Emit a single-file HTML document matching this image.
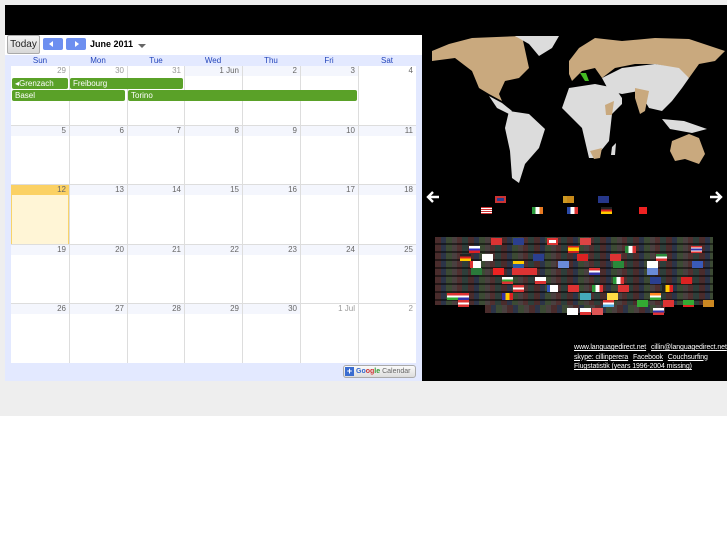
<!DOCTYPE html>
<html><head><meta charset="utf-8">
<style>
*{margin:0;padding:0;box-sizing:border-box}
body{width:727px;height:545px;background:#fff;font-family:"Liberation Sans",sans-serif;position:relative;overflow:hidden}
.gray{position:absolute;left:0;top:0;width:727px;height:416px;background:#eeeeee}
.topbar{position:absolute;left:5px;top:5px;width:722px;height:30px;background:#000}
.cal{position:absolute;left:5px;top:35px;width:417px;height:346px;background:#e3e9ff}
.tb{position:absolute;left:0;top:0;width:417px;height:20px;background:#fff}
.today{position:absolute;left:2px;top:0;width:33px;height:19px;border:1px solid #aaa;border-radius:2px;background:linear-gradient(#f4f4f4,#d8d8d8);font-size:10px;color:#222;text-align:center;line-height:18px}
.nb{position:absolute;top:3px;width:20px;height:12px;background:#6d8ff0;border-radius:2px}
.nb:after{content:"";position:absolute;top:3px;border:3px solid transparent}
.nl:after{left:6px;border-right:4px solid #fff;border-left:0}
.nr:after{left:9px;border-left:4px solid #fff;border-right:0}
.mt{position:absolute;left:85px;top:4px;font-size:9px;font-weight:bold;color:#000}
.dd{position:absolute;left:133px;top:9px;border:4px solid transparent;border-top:4px solid #666;border-bottom:0}
.dh{position:absolute;top:21px;font-size:8px;color:#2244bb;text-align:center;width:58px}
.grid{position:absolute;left:6px;top:31px;width:405px;height:297px;background:#fff}
.vl{position:absolute;top:0;width:1px;height:297px;background:#ddd}
.hl{position:absolute;left:0;width:405px;height:1px;background:#ddd}
.num{position:absolute;height:10px;font-size:8px;color:#666;text-align:right;padding-right:3px;line-height:10px;background:#f4f6fd}
.num.o{background:#fff;color:#999}
.ev{position:absolute;height:11px;background:#5aa128;border-radius:2px;color:#fff;font-size:8px;line-height:11px;padding-left:3px}
.gc{position:absolute;left:338px;top:330px;width:73px;height:13px;border:1px solid #aaa;border-radius:3px;background:linear-gradient(#fafafa,#ddd);font-size:7px;color:#666;line-height:11px}
.right{position:absolute;left:422px;top:35px;width:305px;height:346px;background:#000}
.fl{position:absolute;width:11px;height:7px}
.mosaic{position:absolute;left:13px;top:202px;width:278px;height:68px;background:repeating-linear-gradient(180deg,rgba(0,0,0,0) 0 6px,rgba(0,0,0,.5) 6px 8px),repeating-linear-gradient(90deg,#4a2c2c 0 6px,#2c3448 6px 11px,#3c4a34 11px 17px,#4a4040 17px 22px,#503030 22px 27px,#2e3e3a 27px 33px)}
.mos2{position:absolute;left:63px;top:270px;width:180px;height:8px;background:repeating-linear-gradient(90deg,#4a2c2c 0 6px,#2c3448 6px 11px,#3c4a34 11px 17px,#4a4040 17px 22px)}
.links{position:absolute;left:152px;top:308px;font-size:7px;color:#fff;line-height:9.5px;white-space:nowrap;letter-spacing:-0.1px}
.links u{margin-right:3px}
</style></head><body>
<div class="gray"></div>
<div class="topbar"></div>
<div class="cal">
 <div class="tb">
  <div class="today">Today</div>
  <div class="nb nl" style="left:38px"></div>
  <div class="nb nr" style="left:61px"></div>
  <div class="mt">June 2011</div>
  <div class="dd"></div>
 </div>
 <div class="dh" style="left:6px">Sun</div>
 <div class="dh" style="left:64px">Mon</div>
 <div class="dh" style="left:122px">Tue</div>
 <div class="dh" style="left:179px">Wed</div>
 <div class="dh" style="left:237px">Thu</div>
 <div class="dh" style="left:295px">Fri</div>
 <div class="dh" style="left:353px">Sat</div>
 <div class="grid">
  <div class="num o" style="left:0;top:0;width:58px">29</div>
  <div class="num o" style="left:58px;top:0;width:58px">30</div>
  <div class="num o" style="left:116px;top:0;width:57px">31</div>
  <div class="num" style="left:173px;top:0;width:58px">1 Jun</div>
  <div class="num" style="left:231px;top:0;width:58px">2</div>
  <div class="num" style="left:289px;top:0;width:58px">3</div>
  <div class="num" style="left:347px;top:0;width:58px;background:#fff">4</div>
  <div class="num" style="left:0;top:60px;width:58px">5</div>
  <div class="num" style="left:58px;top:60px;width:58px">6</div>
  <div class="num" style="left:116px;top:60px;width:57px">7</div>
  <div class="num" style="left:173px;top:60px;width:58px">8</div>
  <div class="num" style="left:231px;top:60px;width:58px">9</div>
  <div class="num" style="left:289px;top:60px;width:58px">10</div>
  <div class="num" style="left:347px;top:60px;width:58px">11</div>
  <div style="position:absolute;left:0;top:119px;width:58px;height:60px;background:#fff5d6;border:1px solid #f8d36a"></div>
  <div class="num" style="left:0;top:119px;width:58px;background:#fbd164">12</div>
  <div class="num" style="left:58px;top:119px;width:58px">13</div>
  <div class="num" style="left:116px;top:119px;width:57px">14</div>
  <div class="num" style="left:173px;top:119px;width:58px">15</div>
  <div class="num" style="left:231px;top:119px;width:58px">16</div>
  <div class="num" style="left:289px;top:119px;width:58px">17</div>
  <div class="num" style="left:347px;top:119px;width:58px">18</div>
  <div class="num" style="left:0;top:179px;width:58px">19</div>
  <div class="num" style="left:58px;top:179px;width:58px">20</div>
  <div class="num" style="left:116px;top:179px;width:57px">21</div>
  <div class="num" style="left:173px;top:179px;width:58px">22</div>
  <div class="num" style="left:231px;top:179px;width:58px">23</div>
  <div class="num" style="left:289px;top:179px;width:58px">24</div>
  <div class="num" style="left:347px;top:179px;width:58px">25</div>
  <div class="num" style="left:0;top:238px;width:58px">26</div>
  <div class="num" style="left:58px;top:238px;width:58px">27</div>
  <div class="num" style="left:116px;top:238px;width:57px">28</div>
  <div class="num" style="left:173px;top:238px;width:58px">29</div>
  <div class="num" style="left:231px;top:238px;width:58px">30</div>
  <div class="num o" style="left:289px;top:238px;width:58px">1 Jul</div>
  <div class="num o" style="left:347px;top:238px;width:58px">2</div>
  <div class="vl" style="left:58px"></div><div class="vl" style="left:116px"></div><div class="vl" style="left:173px"></div><div class="vl" style="left:231px"></div><div class="vl" style="left:289px"></div><div class="vl" style="left:347px"></div>
  <div class="hl" style="top:59px"></div><div class="hl" style="top:118px"></div><div class="hl" style="top:178px"></div><div class="hl" style="top:237px"></div>
  <div class="ev" style="left:1px;top:12px;width:56px">◂Grenzach</div>
  <div class="ev" style="left:59px;top:12px;width:113px">Freibourg</div>
  <div class="ev" style="left:1px;top:24px;width:113px">Basel</div>
  <div class="ev" style="left:117px;top:24px;width:229px">Torino</div>
 </div>
 <div class="gc"><span style="display:inline-block;width:9px;height:9px;background:#3a6cd0;color:#fff;font-size:9px;line-height:9px;text-align:center;margin:1px 2px 0 1px;vertical-align:top;font-weight:bold">+</span><span style="color:#3366cc;font-weight:bold">Go</span><span style="color:#cc3333;font-weight:bold">og</span><span style="color:#339933;font-weight:bold">le</span> Calendar</div>
</div>
<div class="right">
 <svg width="305" height="150" viewBox="0 0 305 150" style="position:absolute;left:0;top:0">
  <g fill="#c9a97e">
   <polygon points="10,16 27,9 50,3 100,1 107,33 97,43 83,46 77,59 80,66 67,59 57,53 50,36 33,23 10,26"/>
   <polygon points="147,26 157,13 173,3 200,6 233,3 267,4 303,16 293,26 277,29 267,43 253,33 233,29 213,29 193,33 180,43 173,33 160,36 150,46 147,39"/>
   <polygon points="250,106 267,99 277,103 283,119 277,129 263,124 253,126 248,116"/>
  </g>
  <g fill="#dcdcdc">
   <polygon points="93,1 137,1 130,13 117,21 107,9"/>
   <polygon points="67,61 80,68 90,76 87,79 75,73"/>
   <polygon points="87,76 107,79 123,94 117,113 103,129 97,148 90,143 88,116 83,93"/>
   <polygon points="180,43 200,33 233,29 257,33 267,43 260,53 250,66 240,76 227,73 217,56 200,59 187,56"/>
   <polygon points="147,53 173,49 193,53 200,63 200,69 190,79 187,106 173,123 167,123 160,93 150,83 140,73"/>
   <polygon points="240,84 262,86 285,94 270,98 248,94"/>
   <polygon points="190,112 194,108 193,120 189,120"/>
  </g>
  <g fill="#c9a97e">
   <polygon points="213,53 227,56 223,76 218,79 213,63"/>
   <polygon points="168,116 180,113 178,123 172,124"/>
   <polygon points="183,70 192,66 190,80 184,80"/>
  </g>
  <polygon points="158,38 164,38 167,46 163,46" fill="#44bb22"/>
 </svg>
 <svg width="16" height="14" viewBox="0 0 16 14" style="position:absolute;left:3px;top:155px"><path d="M14 7H3M8 2L3 7l5 5" stroke="#fff" stroke-width="2.4" fill="none"/></svg>
 <svg width="16" height="14" viewBox="0 0 16 14" style="position:absolute;left:286px;top:155px"><path d="M2 7h11M8 2l5 5-5 5" stroke="#fff" stroke-width="2.4" fill="none"/></svg>
 <div class="fl" style="left:73px;top:161px;background:#2b3f8f;border:2px solid #c33"></div>
 <div class="fl" style="left:141px;top:161px;background:#c88a1a;border-left:4px solid #c92"></div>
 <div class="fl" style="left:176px;top:161px;background:#26378a"></div>
 <div class="fl" style="left:59px;top:172px;background:repeating-linear-gradient(#c33 0 1px,#fff 1px 2px)"></div>
 <div class="fl" style="left:110px;top:172px;background:linear-gradient(90deg,#2a9a3a 33%,#fff 33% 66%,#e87a22 66%)"></div>
 <div class="fl" style="left:145px;top:172px;background:linear-gradient(90deg,#2a4aa8 33%,#fff 33% 66%,#d33 66%)"></div>
 <div class="fl" style="left:179px;top:172px;background:linear-gradient(#222 33%,#d22 33% 66%,#fc0 66%)"></div>
 <div class="fl" style="left:217px;top:172px;background:#e22;width:8px"></div>
 <div class="mosaic"></div>
 <div class="mos2"></div>
 <div class="fl" style="left:69px;top:203px;background:#d33"></div>
 <div class="fl" style="left:91px;top:203px;background:#2b3f8f"></div>
 <div class="fl" style="left:125px;top:203px;background:#fff;border:2px solid #d33"></div>
 <div class="fl" style="left:158px;top:203px;background:#d44"></div>
 <div class="fl" style="left:47px;top:211px;background:linear-gradient(#fff 33%,#33c 33% 66%,#d22 66%)"></div>
 <div class="fl" style="left:146px;top:211px;background:linear-gradient(#c22 25%,#fc0 25% 75%,#c22 75%)"></div>
 <div class="fl" style="left:203px;top:211px;background:linear-gradient(90deg,#2a8a3a 33%,#fff 33% 66%,#d33 66%)"></div>
 <div class="fl" style="left:269px;top:211px;background:linear-gradient(#d33 20%,#fff 20% 35%,#33a 35% 65%,#fff 65% 80%,#d33 80%)"></div>
 <div class="fl" style="left:38px;top:219px;background:linear-gradient(#222 33%,#d22 33% 66%,#fc0 66%)"></div>
 <div class="fl" style="left:60px;top:219px;background:#fff"></div>
 <div class="fl" style="left:111px;top:219px;background:#2b3f8f"></div>
 <div class="fl" style="left:155px;top:219px;background:#d22"></div>
 <div class="fl" style="left:188px;top:219px;background:#d33"></div>
 <div class="fl" style="left:234px;top:219px;background:linear-gradient(#2a8a3a 33%,#fff 33% 66%,#d33 66%)"></div>
 <div class="fl" style="left:48px;top:226px;background:#fff;border-left:3px solid #d33"></div>
 <div class="fl" style="left:91px;top:226px;background:#2a5aa8;border-top:3px solid #fc0"></div>
 <div class="fl" style="left:136px;top:226px;background:#6a8ad8"></div>
 <div class="fl" style="left:191px;top:226px;background:#2a8a3a"></div>
 <div class="fl" style="left:225px;top:226px;background:#fff"></div>
 <div class="fl" style="left:270px;top:226px;background:#3a5ab8"></div>
 <div class="fl" style="left:49px;top:233px;background:#2a7a3a"></div>
 <div class="fl" style="left:71px;top:233px;background:#e22"></div>
 <div class="fl" style="left:90px;top:233px;background:#d33"></div>
 <div class="fl" style="left:100px;top:233px;background:#d33;width:15px"></div>
 <div class="fl" style="left:167px;top:233px;background:linear-gradient(#d33 33%,#fff 33% 66%,#33a 66%)"></div>
 <div class="fl" style="left:225px;top:233px;background:#6a8ad8"></div>
 <div class="fl" style="left:80px;top:242px;background:linear-gradient(#fff 33%,#3a3 33% 66%,#d33 66%)"></div>
 <div class="fl" style="left:113px;top:242px;background:#fff;border-bottom:3px solid #d33"></div>
 <div class="fl" style="left:191px;top:242px;background:linear-gradient(90deg,#2a9a3a 33%,#fff 33% 66%,#d33 66%)"></div>
 <div class="fl" style="left:228px;top:242px;background:#2b3f8f"></div>
 <div class="fl" style="left:259px;top:242px;background:#d22"></div>
 <div class="fl" style="left:91px;top:250px;background:linear-gradient(#d33 33%,#fff 33% 66%,#d33 66%)"></div>
 <div class="fl" style="left:125px;top:250px;background:#fff;border-left:3px solid #35b"></div>
 <div class="fl" style="left:146px;top:250px;background:#d33"></div>
 <div class="fl" style="left:170px;top:250px;background:linear-gradient(90deg,#2a9a3a 33%,#fff 33% 66%,#d33 66%)"></div>
 <div class="fl" style="left:196px;top:250px;background:#d33"></div>
 <div class="fl" style="left:240px;top:250px;background:linear-gradient(90deg,#222 33%,#fc0 33% 66%,#d22 66%)"></div>
 <div class="fl" style="left:25px;top:258px;background:linear-gradient(#d33 33%,#fff 33% 66%,#3a3 66%)"></div>
 <div class="fl" style="left:36px;top:258px;background:linear-gradient(#d33 33%,#fff 33% 66%,#33a 66%)"></div>
 <div class="fl" style="left:80px;top:258px;background:linear-gradient(90deg,#33a 33%,#fc0 33% 66%,#d22 66%)"></div>
 <div class="fl" style="left:158px;top:258px;background:#4ab"></div>
 <div class="fl" style="left:185px;top:258px;background:#fd4"></div>
 <div class="fl" style="left:228px;top:258px;background:linear-gradient(#f82 33%,#fff 33% 66%,#3a3 66%)"></div>
 <div class="fl" style="left:36px;top:265px;background:linear-gradient(#d33 33%,#fff 33% 66%,#d33 66%)"></div>
 <div class="fl" style="left:181px;top:265px;background:linear-gradient(#d33 33%,#fff 33% 66%,#5ad 66%)"></div>
 <div class="fl" style="left:215px;top:265px;background:#3a3"></div>
 <div class="fl" style="left:241px;top:265px;background:#d33"></div>
 <div class="fl" style="left:261px;top:265px;background:#3a3;border-bottom:2px solid #d22"></div>
 <div class="fl" style="left:281px;top:265px;background:#c82"></div>
 <div class="fl" style="left:145px;top:273px;background:#fff"></div>
 <div class="fl" style="left:158px;top:273px;background:#fff;border-bottom:3px solid #d33"></div>
 <div class="fl" style="left:170px;top:273px;background:#d55"></div>
 <div class="fl" style="left:231px;top:273px;background:linear-gradient(#fff 33%,#33a 33% 66%,#d33 66%)"></div>
 <div class="links"><u>www.languagedirect.net</u> <u>cillin@languagedirect.net</u><br><u>skype: cillinperera</u> <u>Facebook</u> <u>Couchsurfing</u><br><u>Flugstatistik (years 1996-2004 missing)</u></div>
</div>
</body></html>
